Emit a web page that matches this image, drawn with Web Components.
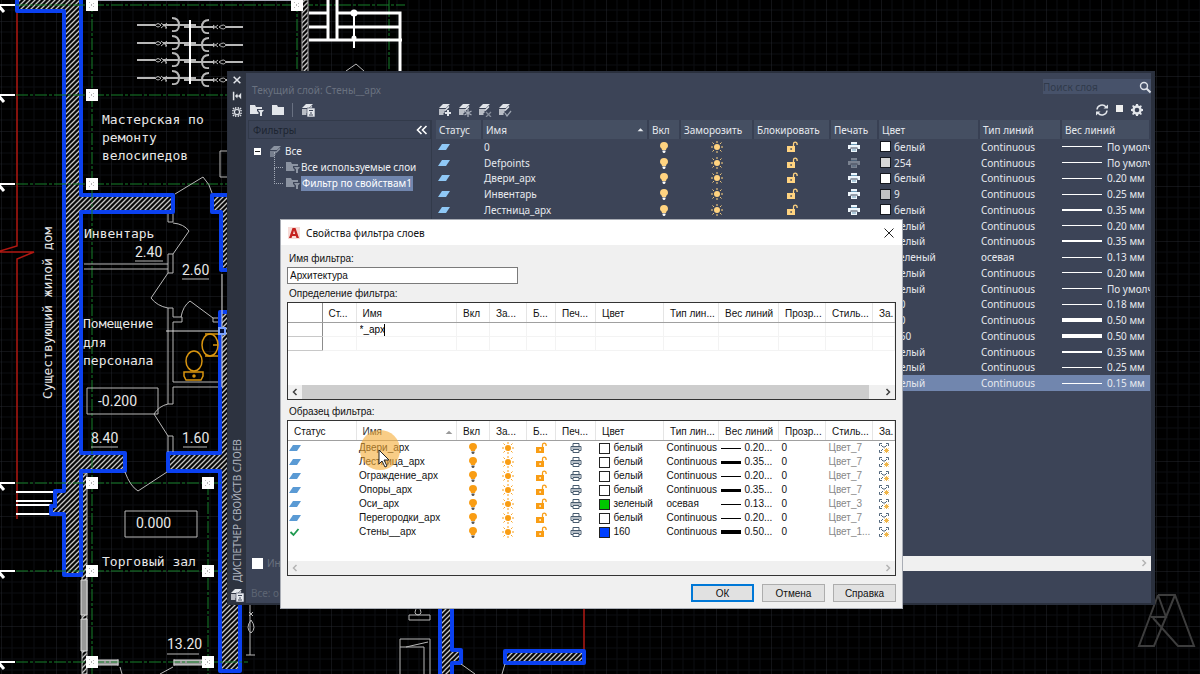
<!DOCTYPE html>
<html lang="ru">
<head>
<meta charset="utf-8">
<meta name="viewport" content="width=device-width, initial-scale=1">
<title>Диспетчер свойств слоев</title>
<style>
  html, body {
    margin: 0;
    height: 100%;
  }

  body {
    position: relative;
    overflow: hidden;
    background: #000;
    font-family: "Noto Sans", "Open Sans", sans-serif;
    font-size: 10px;
  }
</style>
</head>
<body>
<cad-drawing></cad-drawing>
<layer-palette></layer-palette>
<filter-dialog></filter-dialog>
<click-pointer></click-pointer>

<script>
const ICONS = {
  bulb: '<path fill="currentColor" d="M6 1a4 4 0 0 1 4 4c0 2-2 2-2 4H4c0-2-2-2-2-4a4 4 0 0 1 4-4z"/><path class="base" d="M4.500 9.500h3V11l-1 1h-1l-1-1z"/>',
  sun: '<circle cx="6" cy="6" r="3" fill="currentColor"/><path stroke="currentColor" d="M6 0v2M6 10v2M0 6h2M10 6h2M1.500 1.500l1.400 1.400M9.100 9.100l1.400 1.400M1.500 10.500l1.400-1.400M9.100 2.900l1.400-1.400"/>',
  lock: '<path fill="currentColor" fill-rule="evenodd" d="M1 5h8v6H1zM4.500 7v2h1.200V7z"/><path fill="none" stroke="currentColor" stroke-width="1.300" d="M7.500 5V3a1.800 1.800 0 0 1 3.600 0v1"/>',
  printer: '<path fill="currentColor" d="M3 1h6v2H3zM0 4h12v4H9.500V6.500h-7V8H0zM3 7.500h6V11H3z"/><path stroke="#6b9bb8" d="M3 3.500h6M4 9h4"/>',
  printerLine: '<path fill="none" stroke="#465a6e" d="M3 4V1.500h6V4M3 8.500H1v-4h10v4H9M3 7.500h6v3H3z"/><path stroke="#465a6e" stroke-width=".8" d="M2 6h8"/>',
  sheet: '<path fill="currentColor" d="M4 3h8L8 9H0z"/>',
  check: '<path fill="none" stroke="#1f9950" stroke-width="1.800" d="M1.500 6l3 3 5-6"/>',
  freeze: '<path fill="none" stroke="#52677c" d="M1.500 4V1.500H4M8 1.500h2.500V4M1.500 8v2.500H4M3 3l2 2h2l2-2M3 9l2-2"/><path fill="none" stroke="#f0b64a" d="M6.500 6.500l4 4M10.500 6.500l-4 4M8.500 6v5M6 8.500h5"/>',
  layers: '<path fill="currentColor" d="M5 1h7L8 5H1z"/><path fill="none" stroke="currentColor" stroke-width="1.300" d="M1 7h6.500l3.500-3.500M1 9h5.500M1 11h4.500"/>',
  folder: '<path fill="currentColor" d="M0 1h5l1 2h6v8H0z"/>',
  folderFilter: '<path fill="currentColor" d="M0 1h5l1 2h6v2H7v2l1.500 1.500V10H0z"/><path fill="currentColor" d="M8 6h6l-2 2.500V12h-2V8.500z"/>',
  close: '<path fill="none" stroke="currentColor" stroke-width="1.800" d="M2 2l8 8M10 2l-8 8"/>',
  closeThin: '<path fill="none" stroke="currentColor" d="M1.500 1.500l9 9M10.500 1.500l-9 9"/>',
  pin: '<path fill="currentColor" d="M1 1h1.800v10H1zM3.500 6l3-3v2.200h1v1.600h-1V9zM11 2v8L7.500 6z"/>',
  gear: '<path fill="currentColor" d="M5 0h2l.3 1.600 1.200.5L9.900 1.200l1 1-.9 1.400.5 1.200L12 5v2l-1.500.3-.5 1.200.9 1.400-1 1-1.400-.9-1.200.5L7 12H5l-.3-1.500-1.200-.5-1.400.9-1-1L2 8.500l-.5-1.200L0 7V5l1.500-.3L2 3.500l-.9-1.400 1-1 1.400.9 1.200-.5z"/><circle cx="6" cy="6" r="2.300" fill="var(--hole, #3c4457)"/>',
  sunburst: '<circle cx="6" cy="6" r="3" fill="none" stroke="currentColor" stroke-width="1.400"/><path stroke="currentColor" stroke-width="1.400" d="M4.500 0v3M7.500 0v3M4.500 9v3M7.500 9v3M0 4.500h3M0 7.500h3M9 4.500h3M9 7.500h3M1 1l2 2M11 1L9 3M1 11l2-2M11 11L9 9"/>',
  refresh: '<path fill="none" stroke="currentColor" stroke-width="1.500" d="M1 5.500A5 5 0 0 1 10 3M11 6.500A5 5 0 0 1 2 9"/><path fill="currentColor" d="M7.500 4.500H12V.5zM4.500 7.500H0v4z"/>',
  search: '<circle cx="5" cy="5" r="3.500" fill="none" stroke="currentColor" stroke-width="1.400"/><path stroke="currentColor" stroke-width="2" d="M7.500 7.500l4 4"/>',
  collapse: '<path fill="none" stroke="currentColor" stroke-width="1.600" d="M5.500 2l-4 4 4 4M10.500 2l-4 4 4 4"/>',
  left: '<path fill="none" stroke="currentColor" stroke-width="1.500" d="M7.500 3l-3 3 3 3"/>',
  right: '<path fill="none" stroke="currentColor" stroke-width="1.500" d="M4.500 3l3 3-3 3"/>',
  up: '<path fill="currentColor" d="M1 9l5-5 5 5z"/>',
  appA: '<path fill="#f7dcd8" d="M0 0h12v12H0z"/><path fill="#c5221f" fill-rule="evenodd" d="M4.500 1h3L11 11H8.500L7.800 9H4.200l-.7 2H1zM5 7h2.200L6 3.500z"/>'
};

class UiIcon extends HTMLElement {
  connectedCallback() {
    this.attachShadow({ mode: 'open' });
    this.shadowRoot.innerHTML = `
      <style>
        :host {
          display: inline-block;
          width: 12px;
          height: 12px;
          vertical-align: middle;
        }

        svg {
          display: block;
          width: 100%;
          height: 100%;
          overflow: visible;
        }

        .base {
          fill: var(--base, #fff);
        }
      </style>
      <svg viewBox="0 0 12 12" aria-hidden="true">${ICONS[this.getAttribute('name')]}</svg>
    `;
  }
}

// Layer stack with a small badge in the lower right corner
const BADGES = {
  add: '<path stroke="currentColor" stroke-width="2" d="M10 7v6M7 10h6"/>',
  snow: '<path stroke="#a9afba" stroke-width="1.300" d="M10 6v8M6.500 8l7 4M6.500 12l7-4"/>',
  del: '<path stroke="#858c99" stroke-width="1.300" d="M8 9l5 5M13 9l-5 5"/>',
  set: '<path fill="none" stroke="#9fa6b2" stroke-width="1.300" d="M7 10l2 3 4-5"/>',
  state: '<path fill="currentColor" stroke="#3c4457" stroke-width=".6" d="M6 5h8v9H6z"/><path stroke="#3c4457" d="M8 7.500h4M8 12h4M10 9v2"/>'
};

class LayerIcon extends HTMLElement {
  connectedCallback() {
    this.attachShadow({ mode: 'open' });
    this.shadowRoot.innerHTML = `
      <style>
        :host {
          display: block;
          width: 14px;
          height: 14px;
        }

        svg {
          display: block;
        }
      </style>
      <svg width="14" height="14" aria-hidden="true">${ICONS.layers}${BADGES[this.getAttribute('badge')]}</svg>
    `;
  }
}

class ScrollRail extends HTMLElement {
  connectedCallback() {
    this.attachShadow({ mode: 'open' });
    this.shadowRoot.innerHTML = `
      <style>
        :host {
          display: flex;
          align-items: stretch;
          height: 14px;
          background: #f0f0f0;
          color: #b4b4b4;
        }

        :host([active]) {
          color: #404040;
        }

        button {
          width: 14px;
          padding: 0;
          border: 0;
          background: none;
          color: inherit;
          line-height: 0;
        }

        .track {
          flex: 1;
          margin-right: 12px;
        }

        :host([active]) .track {
          background: #cdcdcd;
        }
      </style>
      <button type="button" aria-label="Влево"><ui-icon name="left"></ui-icon></button>
      <div class="track"></div>
      <button type="button" aria-label="Вправо"><ui-icon name="right"></ui-icon></button>
    `;
  }
}

class CadDrawing extends HTMLElement {
  connectedCallback() {
    this.attachShadow({ mode: 'open' });

    const columns = [[92, 5], [92, 95], [92, 184], [297, 5], [92, 483], [208, 483], [92, 571], [208, 571], [92, 662], [208, 662]]
      .map(([x, y]) => `<g transform="translate(${x} ${y})"><path fill="#fff" d="M-6-6H6V6H-6z"/><path stroke="#999" stroke-dasharray="1 2" d="M-3-3L3 3M-3 3L3-3"/></g>`).join('');

    const marks = [5, 95, 184, 483, 571, 662]
      .map(y => `<path d="M0 ${y}H15"/><path stroke-width="3" d="M-2 ${y}L4 ${y + 7}"/>`).join('');

    const bikes = [25, 43, 60, 78].map(y => `
      <g transform="translate(0 ${y})">
        <path stroke-width="2" d="M137 0H155M163 0H196M184 2H214M226 2H243"/>
        <path d="M155 0q3-3 6 0q-3 4-6 0M161-2l6 5M161 3l6-5M166-1v5M213 0l5 4M213 4l5-4M219 2q5-4 7 0q-2 4-7 0"/>
        <path stroke-width="2" d="M172-7q7 0 7 7t-7 6M209-5q-7 0-7 7t7 6"/>
      </g>`).join('');

    this.shadowRoot.innerHTML = `
      <style>
        :host {
          display: block;
          width: 100%;
          height: 100%;
        }

        svg {
          display: block;
          width: 100%;
          height: 100%;
        }

        text {
          fill: #e8e8e8;
          font: 13px "DejaVu Sans Mono", monospace;
        }

        .num {
          font: 14px Roboto, sans-serif;
        }

        .thin {
          fill: none;
          stroke: #b8b8b8;
        }

        .axis {
          fill: none;
          stroke: #16802a;
          stroke-dasharray: 12 2 3 2;
        }

        .wall {
          fill: url(#hatch);
          stroke: #0b41f0;
          stroke-width: 4;
          stroke-linejoin: round;
        }
      </style>
      <svg>
        <defs>
          <pattern id="grid" x="1" y="21" width="55" height="55" patternUnits="userSpaceOnUse">
            <path fill="none" stroke="#0b0d11" d="M11 0v55M22 0v55M33 0v55M44 0v55M0 11h55M0 22h55M0 33h55M0 44h55"/>
            <path fill="none" stroke="#23262c" d="M0 0H55M0 0V55"/>
          </pattern>
          <pattern id="hatch" width="5" height="5" patternUnits="userSpaceOnUse">
            <path fill="#080808" d="M0 0h5v5H0z"/>
            <path stroke="#c6c6c6" stroke-width="1.300" d="M-1 6L6-1M-1 1L1-1M4 6L6 4"/>
          </pattern>
        </defs>
        <rect width="100%" height="100%" fill="url(#grid)"/>

        <path fill="none" stroke="#b01812" stroke-width="1.500" d="M17 0V246L0 251M0 252H34L17 259V519M584 600V650"/>
        <g stroke="#fff" stroke-width="2">${marks}</g>
        <path stroke="#aab" stroke-width="2" d="M94 0H305"/>
        <path stroke="#fff" stroke-width="2" d="M16 492H54M16 501H52M16 505H52M16 514H50"/>
        <path fill="url(#hatch)" stroke="#bbb" d="M82 473H87V674H82z"/>
        <path fill="#999" stroke="#ddd" d="M81 580H87V615H81zM81 619H87V651H81zM97 660H118V665H97zM174 660H202V665H174z"/>

        <path class="wall" d="M17-5V11H64V491H55V506H51V514H64V575H81V471H125V453H81V212H173V195H81V-5z"/>
        <path class="wall" d="M240 195H212V212H221V270H240z"/>
        <path class="wall" d="M240 312H220V453H168V471H220V671H240z"/>
        <path class="wall" d="M440 600H452V650H461V663H452V680H440z"/>
        <path class="wall" d="M505 651H584V663H505z"/>

        <path class="axis" d="M16 5H405M16 95H229M16 184H229M16 483H221M16 571H221M16 662H248M92 0V674M208 483V674M297 0V72M389 0V72"/>
        <path fill="url(#hatch)" stroke="#aaa" d="M302 0H308V72H302z"/>
        ${columns}

        <g class="thin">${bikes}<path stroke="#fff" stroke-width="2" d="M190 20V84"/></g>

        <g fill="none" stroke="#fff" stroke-width="3">
          <path d="M309 13H328M309 27H328M309 40H402M328 0V40M337 0V40M337 13H400V72M337 27H400"/>
          <path stroke-width="2" d="M354 13V48"/>
          <circle cx="354" cy="13" r="2"/>
          <circle cx="354" cy="38" r="1"/>
        </g>

        <g class="thin">
          <path d="M346 71L356 64L364 71M175 194L203 177Q210 184 212 193M229 151H220V177H229"/>
          <path d="M84 264H168V273H173V254H168V264M84 269H168M168 214V222H173V214M173 223Q184 224 189 231L173 254"/>
          <path d="M168 273L151 298Q157 306 168 308M168 404V308H173V317H182V322H173V382H218M168 404H173V387H218M181 317Q183 306 190 301L213 318H218M213 318V322H218"/>
          <path d="M168 404Q159 406 154 414L168 436M168 436V452M173 436V452M168 436H173"/>
          <path d="M125 472Q130 486 138 491L167 472M87 388H158V414H87zM125 511H197V537H125z"/>
          <path d="M135 261H163M182 279H209M91 447H118M183 447H207M167 654H199"/>
          <path d="M120 667L122 674M173 667L160 674M118 659V666M174 659V666M250 605V655M246 655H255M249 612l4 4M253 612l-4 4M251 620q-6 8 0 13q6-5 0-13"/>
          <path d="M418 606q-6 8 0 9q6-1 0-9M409 615H430V620H409zM400 639H430V674M400 639V647H424V674M400 647V674M428 642L406 647M461 664L475 674M505 664L502 674"/>
          <path stroke="#ddd" d="M166 331H219M222 274V328M222 334V387"/>
        </g>
        <path fill="#05103a" stroke="#7aa2ff" stroke-width="2" d="M219 328H225V334H219z"/>
        <g fill="none" stroke="#d9950f" stroke-width="1.500">
          <ellipse cx="210" cy="345" rx="8" ry="11"/>
          <path d="M205 334H218M205 356H218M213 345H218"/>
          <ellipse cx="194" cy="361" rx="8" ry="10"/>
          <path d="M184 372H203V376L201 380H186L184 376z"/>
          <circle cx="194" cy="376" r="1"/>
        </g>
        <path fill="none" stroke="#3d3d3d" stroke-width="2" d="M1158 595H1175L1194 646H1178L1153 618M1158 595L1139 646H1154L1166 617L1175 595M1151 617H1166L1158 595"/>

        <text x="102" y="124">Мастерская по</text>
        <text x="102" y="142">ремонту</text>
        <text x="102" y="160">велосипедов</text>
        <text x="84" y="238">Инвентарь</text>
        <text x="83" y="328">Помещение</text>
        <text x="83" y="347">для</text>
        <text x="83" y="365">персонала</text>
        <text x="102" y="566">Торговый зал</text>
        <text x="-399" y="52" transform="rotate(-90)">Существующий жилой дом</text>
        <text class="num" x="135" y="257">2.40</text>
        <text class="num" x="182" y="275">2.60</text>
        <text class="num" x="98" y="406">-0.200</text>
        <text class="num" x="91" y="443">8.40</text>
        <text class="num" x="182" y="443">1.60</text>
        <text class="num" x="136" y="528">0.000</text>
        <text class="num" x="167" y="649">13.20</text>
      </svg>
    `;
  }
}

class LayerTable extends HTMLElement {
  connectedCallback() {
    // name, plot flag, swatch, colour, linetype, lineweight, line thickness
    const rows = [
      ['0', true, '#fff', 'белый', 'Continuous', 'По умолчанию', 1],
      ['Defpoints', false, '#d6d6d6', '254', 'Continuous', 'По умолчанию', 1],
      ['Двери_арх', true, '#fff', 'белый', 'Continuous', '0.20 мм', 1],
      ['Инвентарь', true, '#c0c0c0', '9', 'Continuous', '0.25 мм', 1],
      ['Лестница_арх', true, '#fff', 'белый', 'Continuous', '0.35 мм', 2],
      ['', true, '#fff', 'белый', 'Continuous', '0.20 мм', 1],
      ['', true, '#fff', 'белый', 'Continuous', '0.35 мм', 2],
      ['', true, '#0c0', 'зеленый', 'осевая', '0.13 мм', 1],
      ['', true, '#fff', 'белый', 'Continuous', '0.20 мм', 1],
      ['', true, '#fff', 'белый', 'Continuous', 'По умолчанию', 1],
      ['', true, '#f80', '30', 'Continuous', '0.18 мм', 1],
      ['', true, '#fb0', '40', 'Continuous', '0.50 мм', 4],
      ['', true, '#04f', '160', 'Continuous', '0.50 мм', 4],
      ['', true, '#fff', 'белый', 'Continuous', '0.35 мм', 2],
      ['', true, '#fff', 'белый', 'Continuous', '0.25 мм', 1],
      ['', true, '#fff', 'белый', 'Continuous', '0.15 мм', 1]
    ];

    this.attachShadow({ mode: 'open' });
    this.shadowRoot.innerHTML = `
      <style>
        :host {
          display: block;
          overflow: hidden;
        }

        table {
          width: 100%;
          height: 271px;
          table-layout: fixed;
          border-collapse: collapse;
          line-height: 14px;
        }

        th, td {
          padding: 0 3px;
          font-weight: 400;
          text-align: left;
          white-space: nowrap;
          overflow: hidden;
        }

        th {
          height: 19px;
          background: #454f62;
          border-right: 2px solid #384053;
        }

        td {
          height: 14px;
          padding: 0 2px;
        }

        tr:last-child td {
          background: #7186ae;
        }

        .c {
          text-align: center;
          color: #ffd380;
        }

        .sheet {
          color: #8fc8f6;
        }

        .print {
          color: #eef6fb;
        }

        .off {
          opacity: .35;
        }

        .name {
          display: flex;
          justify-content: space-between;
          align-items: center;
        }

        .name ui-icon {
          width: 7px;
          height: 7px;
        }

        .pair {
          display: flex;
          align-items: center;
          gap: 3px;
        }

        .swatch {
          width: 9px;
          height: 9px;
          flex: none;
          border: 1px solid #15181f;
        }

        .weight {
          gap: 5px;
        }

        .weight i {
          width: 40px;
          flex: none;
          background: #fff;
        }

        td:last-child {
          padding: 0 0 0 1px;
        }

        ui-icon {
          display: block;
        }

        .c ui-icon {
          margin: 0 auto;
        }
      </style>
      <table>
        <colgroup>
          <col style="width:46px"><col><col style="width:32px"><col style="width:73px"><col style="width:77px"><col style="width:48px"><col style="width:101px"><col style="width:82px"><col style="width:89px">
        </colgroup>
        <thead>
          <tr>
            <th>Статус</th>
            <th><div class="name">Имя<ui-icon name="up"></ui-icon></div></th>
            <th>Вкл</th><th>Заморозить</th><th>Блокировать</th><th>Печать</th>
            <th>Цвет</th><th>Тип линий</th><th>Вес линий</th>
          </tr>
        </thead>
        <tbody>
          ${rows.map(([name, plot, swatch, color, type, weight, size]) => `
            <tr>
              <td class="sheet"><ui-icon name="sheet"></ui-icon></td>
              <td>${name}</td>
              <td class="c"><ui-icon name="bulb"></ui-icon></td>
              <td class="c"><ui-icon name="sun"></ui-icon></td>
              <td class="c"><ui-icon name="lock"></ui-icon></td>
              <td class="c print ${plot ? '' : 'off'}"><ui-icon name="printer"></ui-icon></td>
              <td><div class="pair"><span class="swatch" style="background:${swatch}"></span>${color}</div></td>
              <td>${type}</td>
              <td><div class="pair weight"><i style="height:${size}px"></i>${weight}</div></td>
            </tr>`).join('')}
        </tbody>
      </table>
    `;
  }
}

class FilterTree extends HTMLElement {
  connectedCallback() {
    this.attachShadow({ mode: 'open' });
    this.shadowRoot.innerHTML = `
      <style>
        :host {
          display: block;
        }

        header {
          display: flex;
          justify-content: space-between;
          align-items: center;
          height: 17px;
          padding: 0 2px 0 4px;
          border: 1px solid #323a4a;
          color: #1c2431;
        }

        button {
          padding: 0;
          border: 0;
          background: none;
          color: #fff;
          line-height: 0;
        }

        ul {
          margin: 0;
          padding: 0;
          list-style: none;
        }

        .root {
          padding: 4px 0 0 6px;
        }

        .row {
          display: flex;
          align-items: center;
          gap: 4px;
          height: 16px;
          color: #eef0f4;
        }

        .row ui-icon {
          color: #8b93a1;
        }

        .row ui-icon[name="layers"] {
          margin-left: 4px;
        }

        .box {
          width: 5px;
          height: 5px;
          border: 1px solid #fff;
          background: linear-gradient(#222, #222) center / 5px 1px no-repeat #fff;
        }

        .children {
          margin-left: 20px;
        }

        .children .row {
          gap: 3px;
        }

        .children .row::before {
          content: "";
          width: 8px;
          height: 15px;
          margin-top: -15px;
          border: dotted #a3aab6;
          border-width: 0 0 1px 1px;
        }

        mark {
          padding: 0 1px;
          background: #7186ae;
          color: #fff;
          line-height: 15px;
        }
      </style>
      <header>Фильтры<button type="button" aria-label="Свернуть"><ui-icon name="collapse"></ui-icon></button></header>
      <ul class="root">
        <li>
          <div class="row"><span class="box"></span><ui-icon name="layers"></ui-icon>Все</div>
          <ul class="children">
            <li class="row"><ui-icon name="folderFilter"></ui-icon>Все используемые слои</li>
            <li class="row"><ui-icon name="folderFilter"></ui-icon><mark>Фильтр по свойствам1</mark></li>
          </ul>
        </li>
      </ul>
    `;
  }
}

class LayerPalette extends HTMLElement {
  connectedCallback() {
    this.attachShadow({ mode: 'open' });
    this.shadowRoot.innerHTML = `
      <style>
        :host {
          position: absolute;
          inset: 71px 45px 69px 227px;
          display: flex;
          box-sizing: border-box;
          border: 2px solid #2a303d;
          border-width: 2px 4px 2px 1px;
          background: #3c4457;
          color: #e6e9ee;
        }

        button {
          display: block;
          padding: 0;
          border: 0;
          background: none;
          color: #e2e5ea;
          line-height: 0;
        }

        .strip {
          display: flex;
          flex-direction: column;
          align-items: center;
          gap: 6px;
          width: 18px;
          box-sizing: border-box;
          padding: 2px 0 1px;
          background: #2d3340;
          --hole: #2d3340;
        }

        .strip ui-icon {
          width: 10px;
          height: 10px;
        }

        .caption {
          flex: 1;
          writing-mode: vertical-rl;
          transform: rotate(180deg);
          color: #b0b5bf;
          line-height: 14px;
        }

        .body {
          flex: 1;
          min-width: 0;
          display: flex;
          flex-direction: column;
          padding: 6px 0 0 2px;
        }

        .top, .tools, .main, .set {
          display: flex;
          align-items: center;
        }

        .top {
          justify-content: space-between;
          height: 21px;
          padding-left: 4px;
          color: #6a7280;
        }

        .search {
          display: flex;
          align-items: center;
          align-self: flex-start;
          width: 108px;
          height: 15px;
          background: #47526a;
          color: #dfe3ea;
        }

        .search input {
          flex: 1;
          min-width: 0;
          padding: 0;
          border: 0;
          background: none;
          color: inherit;
          font: inherit;
        }

        .search input::placeholder {
          color: #303a4b;
          opacity: 1;
        }

        .tools {
          height: 20px;
          padding-left: 2px;
        }

        .set {
          gap: 6px;
        }

        .set.first {
          gap: 8px;
          width: 188px;
        }

        .set.first button:first-child {
          margin-right: 2px;
        }

        .bar {
          width: 1px;
          height: 14px;
          background: #687081;
        }

        .set.last {
          margin-left: auto;
          margin-right: 8px;
          gap: 8px;
        }

        .square {
          width: 7px;
          height: 7px;
          margin-bottom: 4px;
          background: #eee;
        }

        .main {
          flex: 1;
          align-items: stretch;
          gap: 4px;
          min-height: 0;
        }

        filter-tree {
          width: 184px;
          flex: none;
          border-right: 1px solid #323a4a;
          box-sizing: border-box;
        }

        layer-table {
          flex: 1;
          min-width: 0;
        }

        footer {
          display: flex;
          flex-direction: column;
          color: #5c6473;
        }

        .invert {
          display: flex;
          align-items: center;
          height: 16px;
        }

        .invert label {
          display: flex;
          align-items: center;
          gap: 4px;
          width: 182px;
          color: #69717f;
          padding-left: 4px;
        }

        .invert input {
          appearance: none;
          width: 11px;
          height: 11px;
          margin: 0;
          background: #fff;
        }

        scroll-rail {
          flex: 1;
          height: 15px;
        }

        .status {
          padding: 15px 3px 3px;
          line-height: 14px;
        }
      </style>
      <div class="strip">
        <button type="button" aria-label="Закрыть"><ui-icon name="close"></ui-icon></button>
        <button type="button" aria-label="Автоскрытие"><ui-icon name="pin"></ui-icon></button>
        <button type="button" aria-label="Свойства"><ui-icon name="sunburst"></ui-icon></button>
        <span class="caption">ДИСПЕТЧЕР СВОЙСТВ СЛОЕВ</span>
        <layer-icon badge="state"></layer-icon>
      </div>
      <div class="body">
        <div class="top">
          <span>Текущий слой: Стены__арх</span>
          <span class="search"><input type="search" aria-label="Поиск слоя" placeholder="Поиск слоя"><ui-icon name="search"></ui-icon></span>
        </div>
        <div class="tools">
          <div class="set first">
            <button type="button" aria-label="Новый фильтр по свойствам"><ui-icon name="folderFilter"></ui-icon></button>
            <button type="button" aria-label="Новый групповой фильтр"><ui-icon name="folder"></ui-icon></button>
            <span class="bar"></span>
            <button type="button" aria-label="Диспетчер состояний слоев"><layer-icon badge="state"></layer-icon></button>
          </div>
          <div class="set">
            <button type="button" aria-label="Создать слой"><layer-icon badge="add"></layer-icon></button>
            <button type="button" aria-label="Создать замороженный слой"><layer-icon badge="snow"></layer-icon></button>
            <button type="button" aria-label="Удалить слой"><layer-icon badge="del"></layer-icon></button>
            <button type="button" aria-label="Установить"><layer-icon badge="set"></layer-icon></button>
          </div>
          <div class="set last">
            <button type="button" aria-label="Обновить"><ui-icon name="refresh"></ui-icon></button>
            <span class="square"></span>
            <button type="button" aria-label="Параметры"><ui-icon name="gear"></ui-icon></button>
          </div>
        </div>
        <div class="main">
          <filter-tree></filter-tree>
          <layer-table></layer-table>
        </div>
        <footer>
          <div class="invert">
            <label><input type="checkbox">Ин</label>
            <scroll-rail></scroll-rail>
          </div>
          <div class="status">Все: о</div>
        </footer>
      </div>
    `;
  }
}

const DIALOG_TABLE = `
  table {
    width: 100%;
    table-layout: fixed;
    border-collapse: collapse;
    line-height: 14px;
  }

  th, td {
    padding: 0 0 0 3px;
    font-weight: 400;
    text-align: left;
    white-space: nowrap;
    overflow: hidden;
  }

  th {
    height: 17px;
    padding: 2px 0 0 6px;
    border-right: 1px solid #e5e5e5;
    border-bottom: 1px solid #a0a0a0;
  }

  td {
    height: 14px;
  }
`;

const columns = first => [...first, 0, 33, 37, 29, 40, 68, 55, 60, 47, 47, 22]
  .map(w => w ? `<col style="width:${w}px">` : '<col>').join('');

const HEADS = '<th>Вкл</th><th>За...</th><th>Б...</th><th>Печ...</th><th>Цвет</th><th>Тип лин...</th><th>Вес линий</th><th>Прозр...</th><th>Стиль...</th><th>За...</th>';

class FilterDefinition extends HTMLElement {
  connectedCallback() {
    this.attachShadow({ mode: 'open' });
    this.shadowRoot.innerHTML = `
      <style>
        ${DIALOG_TABLE}
        :host {
          display: flex;
          flex-direction: column;
          justify-content: space-between;
          box-sizing: border-box;
          height: 98px;
          border: 1px solid #333;
          background: #fff;
        }

        td {
          height: 13px;
          border: solid #f3f3f3;
          border-width: 0 1px 1px 0;
        }

        td:first-child, th:first-child {
          border-right: 1px solid #8c8c8c;
        }

        td:first-child {
          border-bottom-color: #c8c8c8;
        }

        .edit {
          display: flex;
          align-items: center;
        }

        .edit input {
          width: 24px;
          height: 13px;
          padding: 0;
          border: 0;
          outline: 0;
          background: none;
          font: inherit;
        }

        .edit i {
          width: 1px;
          height: 12px;
          background: #000;
        }
      </style>
      <table>
        <colgroup>${columns([34, 34])}</colgroup>
        <thead><tr><th></th><th>Ст...</th><th>Имя</th>${HEADS}</tr></thead>
        <tbody>
          <tr><td></td><td></td><td><div class="edit"><input aria-label="Имя" value="*_арх"><i></i></div></td>${'<td></td>'.repeat(10)}</tr>
          <tr>${'<td></td>'.repeat(13)}</tr>
        </tbody>
      </table>
      <scroll-rail active></scroll-rail>
    `;
  }
}

class FilterPreview extends HTMLElement {
  connectedCallback() {
    const rows = [
      ['Двери_арх', '#fff', 'белый', 'Continuous', '0.20...', 1, 'Цвет_7'],
      ['Лестница_арх', '#fff', 'белый', 'Continuous', '0.35...', 3, 'Цвет_7'],
      ['Ограждение_арх', '#fff', 'белый', 'Continuous', '0.20...', 1, 'Цвет_7'],
      ['Опоры_арх', '#fff', 'белый', 'Continuous', '0.35...', 3, 'Цвет_7'],
      ['Оси_арх', '#00c800', 'зеленый', 'осевая', '0.13...', 1, 'Цвет_3'],
      ['Перегородки_арх', '#fff', 'белый', 'Continuous', '0.20...', 1, 'Цвет_7'],
      ['Стены__арх', '#0040ff', '160', 'Continuous', '0.50...', 4, 'Цвет_1...']
    ];

    this.attachShadow({ mode: 'open' });
    this.shadowRoot.innerHTML = `
      <style>
        ${DIALOG_TABLE}
        :host {
          display: flex;
          flex-direction: column;
          justify-content: space-between;
          box-sizing: border-box;
          height: 156px;
          border: 1px solid #333;
          background: #fff;
        }

        td:first-child {
          padding-left: 1px;
          color: #5a9ad4;
        }

        .name {
          display: flex;
          align-items: center;
          justify-content: space-between;
          padding-right: 3px;
          color: #333;
        }

        .name ui-icon {
          width: 8px;
          height: 8px;
          color: #999;
        }

        .c {
          padding: 0;
          color: #f99d14;
          --base: #555;
        }

        ui-icon {
          display: block;
        }

        .c ui-icon {
          margin: 0 auto;
        }

        .pair {
          display: flex;
          align-items: center;
          gap: 4px;
        }

        .swatch {
          width: 9px;
          height: 9px;
          flex: none;
          border: 1px solid #222;
        }

        .pair i {
          width: 20px;
          flex: none;
          background: #000;
        }

        .weight {
          padding-left: 2px;
        }

        .style {
          color: #888;
        }
      </style>
      <table>
        <colgroup>${columns([68])}</colgroup>
        <thead>
          <tr><th>Статус</th><th><div class="name">Имя<ui-icon name="up"></ui-icon></div></th>${HEADS}</tr>
        </thead>
        <tbody>
          ${rows.map(([name, swatch, color, type, weight, size, style], i) => `
            <tr>
              <td><ui-icon name="${i === 6 ? 'check' : 'sheet'}"></ui-icon></td>
              <td>${name}</td>
              <td class="c"><ui-icon name="bulb"></ui-icon></td>
              <td class="c"><ui-icon name="sun"></ui-icon></td>
              <td class="c"><ui-icon name="lock"></ui-icon></td>
              <td class="c"><ui-icon name="printerLine"></ui-icon></td>
              <td><div class="pair"><span class="swatch" style="background:${swatch}"></span>${color}</div></td>
              <td>${type}</td>
              <td class="weight"><div class="pair"><i style="height:${size}px"></i>${weight}</div></td>
              <td>0</td>
              <td class="style">${style}</td>
              <td class="c"><ui-icon name="freeze"></ui-icon></td>
            </tr>`).join('')}
        </tbody>
      </table>
      <scroll-rail></scroll-rail>
    `;
  }
}

class FilterDialog extends HTMLElement {
  connectedCallback() {
    this.attachShadow({ mode: 'open' });
    this.shadowRoot.innerHTML = `
      <style>
        :host {
          position: absolute;
          left: 280px;
          right: 297px;
          top: 219px;
          border: 1px solid #a9adb5;
          background: #f0f0f0;
          color: #111;
          font-family: "Liberation Sans", Arial, sans-serif;
          font-size: 10px;
        }

        .title {
          display: flex;
          align-items: center;
          gap: 6px;
          height: 25px;
          padding: 0 7px;
          background: #fff;
          font-family: "Noto Sans", sans-serif;
        }

        .title h1 {
          flex: 1;
          margin: 0;
          font-size: 10px;
          font-weight: 400;
        }

        .title button {
          padding: 0;
          border: 0;
          background: none;
          color: #222;
          line-height: 0;
        }

        form {
          padding: 7px 6px 6px;
        }

        label, .label {
          display: block;
          margin: 0;
          padding: 0 2px 1px;
          line-height: 14px;
        }

        .name {
          display: block;
          box-sizing: border-box;
          width: 231px;
          height: 17px;
          padding: 0 2px;
          border: 1px solid #7a7a7a;
          background: #fff;
          color: inherit;
          font: inherit;
        }

        .label {
          margin-top: 3px;
        }

        .preview {
          margin-top: 5px;
        }

        .buttons {
          display: flex;
          justify-content: flex-end;
          gap: 8px;
          margin-top: 8px;
        }

        .buttons button {
          width: 63px;
          height: 18px;
          padding: 0;
          border: 1px solid #adadad;
          background: #e1e1e1;
          color: inherit;
          font: inherit;
        }

        .buttons .ok {
          border: 2px solid #0078d7;
        }
      </style>
      <div class="title">
        <ui-icon name="appA"></ui-icon>
        <h1>Свойства фильтра слоев</h1>
        <button type="button" aria-label="Закрыть"><ui-icon name="closeThin"></ui-icon></button>
      </div>
      <form>
        <label for="name">Имя фильтра:</label>
        <input class="name" id="name" value="Архитектура">
        <p class="label">Определение фильтра:</p>
        <filter-definition></filter-definition>
        <p class="label preview">Образец фильтра:</p>
        <filter-preview></filter-preview>
        <div class="buttons">
          <button type="button" class="ok">ОК</button>
          <button type="button">Отмена</button>
          <button type="button">Справка</button>
        </div>
      </form>
    `;
  }
}

class ClickPointer extends HTMLElement {
  connectedCallback() {
    this.attachShadow({ mode: 'open' });
    this.shadowRoot.innerHTML = `
      <style>
        :host {
          position: absolute;
          left: 360px;
          top: 430px;
          width: 40px;
          height: 40px;
          pointer-events: none;
        }
      </style>
      <svg width="40" height="40" aria-hidden="true">
        <circle cx="20" cy="20" r="20" fill="#f5ab35" opacity=".6"/>
        <path fill="#fff" stroke="#222" d="M19 20V34L22 31L25 37L27 36L24 30H29z"/>
      </svg>
    `;
  }
}

customElements.define('ui-icon', UiIcon);
customElements.define('layer-icon', LayerIcon);
customElements.define('scroll-rail', ScrollRail);
customElements.define('cad-drawing', CadDrawing);
customElements.define('layer-table', LayerTable);
customElements.define('filter-tree', FilterTree);
customElements.define('layer-palette', LayerPalette);
customElements.define('filter-definition', FilterDefinition);
customElements.define('filter-preview', FilterPreview);
customElements.define('filter-dialog', FilterDialog);
customElements.define('click-pointer', ClickPointer);
</script>
</body>
</html>
